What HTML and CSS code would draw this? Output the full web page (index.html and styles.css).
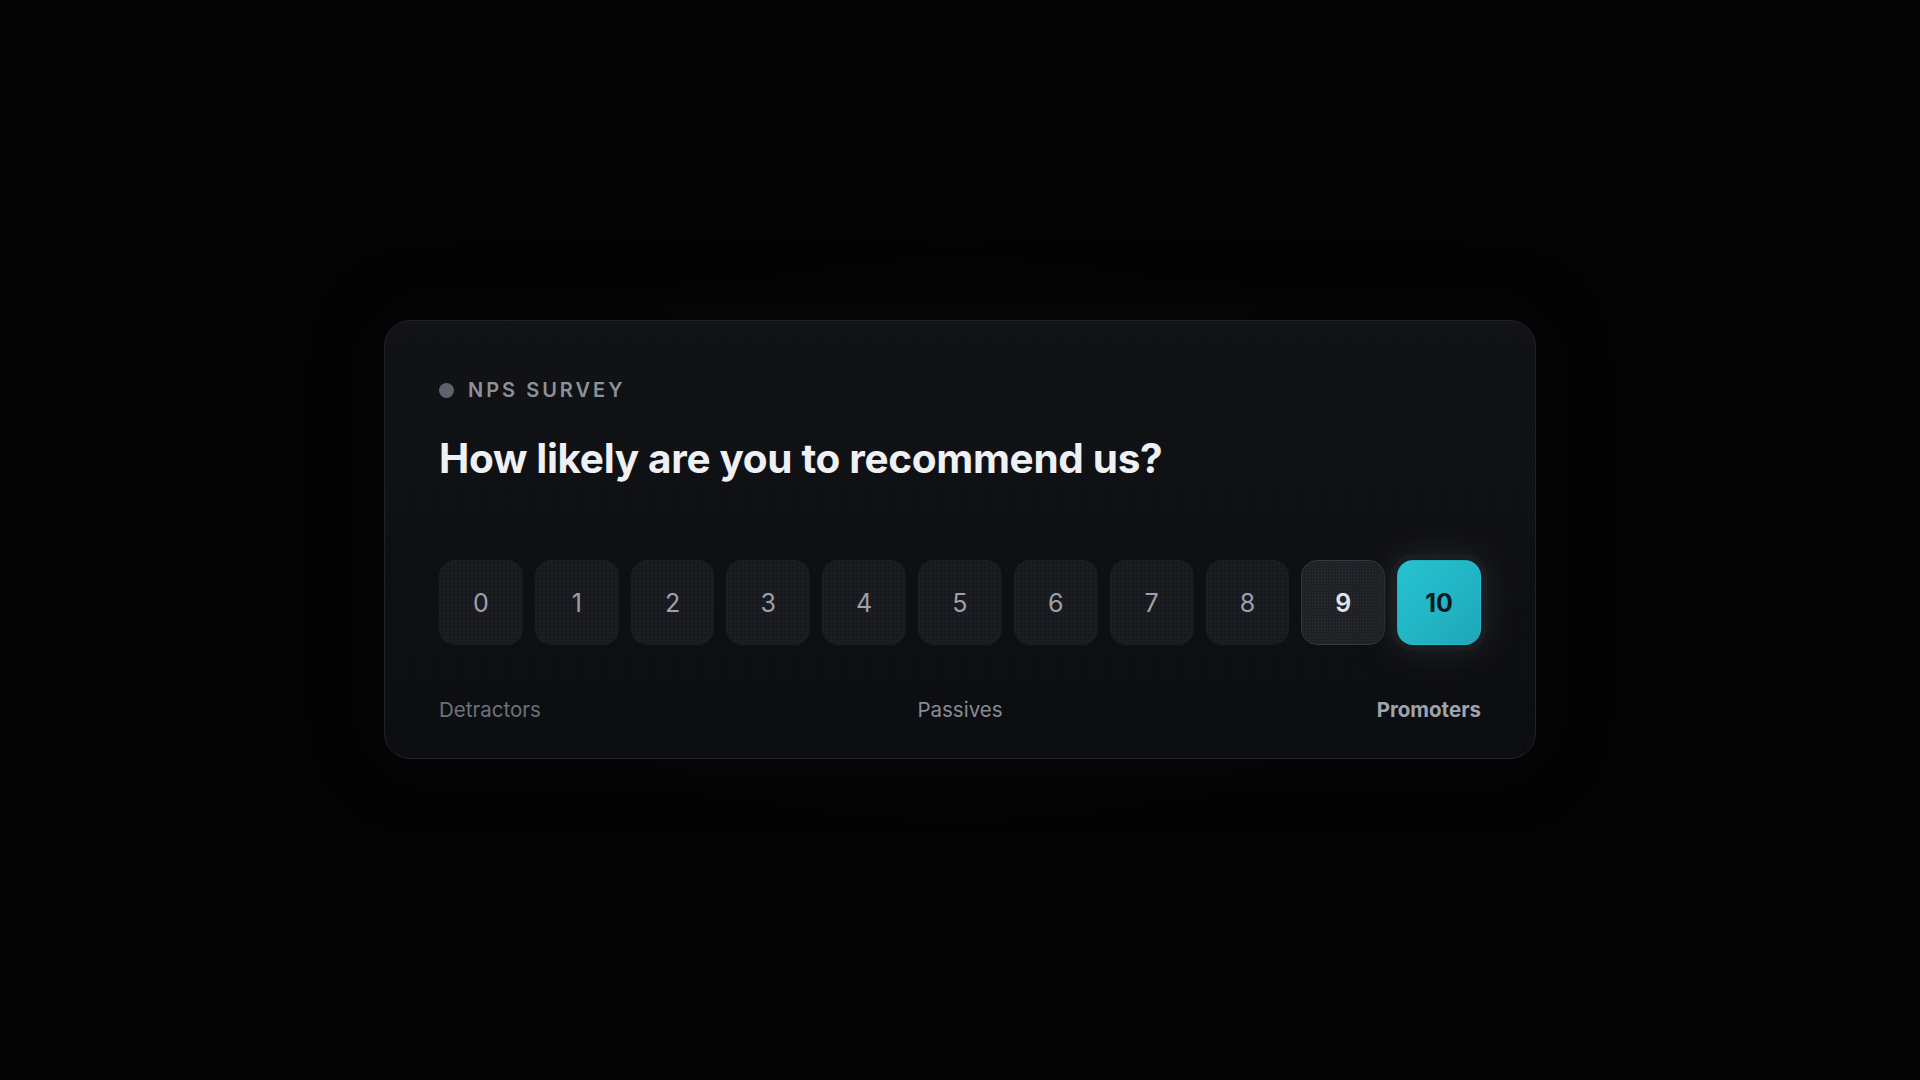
FILE: index.html
```html
<!DOCTYPE html>
<html lang="en">
<head>
<meta charset="utf-8">
<title>NPS Survey</title>
<link rel="stylesheet" href="styles.css">
</head>
<body>
<main class="stage">
  <section class="card">
    <div class="eyebrow"><span class="dot"></span><span>NPS SURVEY</span></div>
    <h1 class="question">How likely are you to recommend us?</h1>
    <div class="scale">
      <button class="score">0</button>
      <button class="score">1</button>
      <button class="score">2</button>
      <button class="score">3</button>
      <button class="score">4</button>
      <button class="score">5</button>
      <button class="score">6</button>
      <button class="score">7</button>
      <button class="score">8</button>
      <button class="score score-hover">9</button>
      <button class="score score-active">10</button>
    </div>
    <div class="legend">
      <span class="legend-item detractors">Detractors</span>
      <span class="legend-item passives">Passives</span>
      <span class="legend-item promoters">Promoters</span>
    </div>
  </section>
</main>
</body>
</html>
```
FILE: styles.css
```css
* { box-sizing: border-box; }
html, body {
  margin: 0;
  padding: 0;
  width: 100%;
  height: 100%;
  background: #040405;
  font-family: Inter, "Noto Sans", "Liberation Sans", sans-serif;
}
.stage {
  width: 1920px;
  height: 1080px;
  display: flex;
  align-items: center;
  justify-content: center;
  background: radial-gradient(ellipse 560px 300px at 50% 50%, #08090a 0%, #060607 60%, #040405 100%);
}
.card {
  width: 1152px;
  height: 439px;
  margin-top: -1px;
  padding: 55px 54px 0 54px;
  border: 1px solid #202228;
  border-radius: 26px;
  background:
    radial-gradient(rgba(255,255,255,0.018) 0.8px, transparent 1px) 0 0 / 3px 3px,
    linear-gradient(180deg, #111215 0%, #0c0d10 100%);
  box-shadow: 0 0 70px 0 rgba(12, 13, 15, 0.45);
  display: flex;
  flex-direction: column;
}
.eyebrow {
  display: flex;
  align-items: center;
  gap: 14px;
  height: 28px;
  font-size: 20px;
  font-weight: 600;
  letter-spacing: 0.15em;
  color: #8c9199;
}
.dot {
  width: 15px;
  height: 15px;
  border-radius: 50%;
  background: #5e636b;
  flex: none;
}
.question {
  margin: 31px 0 0 0;
  font-size: 40.5px;
  line-height: 48px;
  font-weight: 700;
  letter-spacing: -0.008em;
  color: #eef0f4;
}
.scale {
  margin-top: 77px;
  display: flex;
  gap: 12px;
}
.score {
  flex: 1 1 0;
  height: 85px;
  border: 1px solid transparent;
  border-radius: 16px;
  background:
    radial-gradient(rgba(0,0,0,0.22) 0.7px, transparent 1px) 0 0 / 4px 4px,
    #1b1d22;
  color: #9ca1aa;
  font-family: inherit;
  font-size: 25px;
  font-weight: 400;
  padding: 0;
  cursor: pointer;
}
.score-hover {
  background:
    radial-gradient(rgba(255,255,255,0.07) 0.7px, transparent 1px) 0 0 / 3px 3px,
    #1f2126;
  border: 1px solid #33363d;
  color: #e2e4e8;
  font-weight: 600;
}
.score-active {
  background: linear-gradient(135deg, #26c2d0 0%, #22b6c6 50%, #1ea6b6 100%);
  color: #0c1a1e;
  font-weight: 700;
  box-shadow: 0 0 0 6px rgba(30, 32, 36, 0.6), 0 0 30px 8px rgba(32, 36, 40, 0.85);
}
.legend {
  margin-top: 51px;
  display: flex;
  justify-content: space-between;
  font-size: 20.5px;
  line-height: 28px;
}
.legend-item { flex: 1 1 0; }
.detractors { color: #6d727a; text-align: left; }
.passives { color: #878c94; text-align: center; }
.promoters { color: #9fa4ac; font-weight: 700; text-align: right; }
```
